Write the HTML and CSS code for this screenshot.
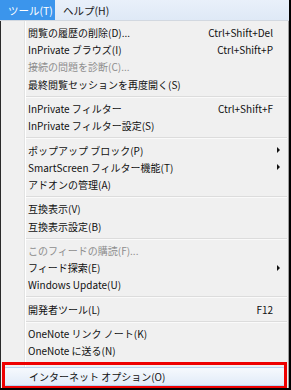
FILE: index.html
```html
<!DOCTYPE html>
<html lang="ja">
<head>
    <meta charset="UTF-8">
    <title>ツール メニュー</title>
    <link rel="stylesheet" href="styles.css">
</head>
<body>
    <div class="frame">
        <div class="menubar">
            <span class="tab active">ツール(T)</span>
            <span class="tab">ヘルプ(H)</span>
        </div>

        <div class="menu">
            <div class="item"><span>閲覧の履歴の削除(D)...</span><span class="key">Ctrl+Shift+Del</span></div>
            <div class="item"><span>InPrivate ブラウズ(I)</span><span class="key">Ctrl+Shift+P</span></div>
            <div class="item disabled"><span>接続の問題を診断(C)...</span></div>
            <div class="item"><span>最終閲覧セッションを再度開く(S)</span></div>
            <div class="sep"></div>
            <div class="item"><span>InPrivate フィルター</span><span class="key">Ctrl+Shift+F</span></div>
            <div class="item"><span>InPrivate フィルター設定(S)</span></div>
            <div class="sep"></div>
            <div class="item"><span>ポップアップ ブロック(P)</span><span class="arrow"></span></div>
            <div class="item"><span>SmartScreen フィルター機能(T)</span><span class="arrow"></span></div>
            <div class="item"><span>アドオンの管理(A)</span></div>
            <div class="sep"></div>
            <div class="item"><span>互換表示(V)</span></div>
            <div class="item"><span>互換表示設定(B)</span></div>
            <div class="sep"></div>
            <div class="item disabled"><span>このフィードの購読(F)...</span></div>
            <div class="item"><span>フィード探索(E)</span><span class="arrow"></span></div>
            <div class="item"><span>Windows Update(U)</span></div>
            <div class="sep"></div>
            <div class="item"><span>開発者ツール(L)</span><span class="key">F12</span></div>
            <div class="sep"></div>
            <div class="item"><span>OneNote リンク ノート(K)</span></div>
            <div class="item"><span>OneNote に送る(N)</span></div>
            <div class="sep"></div>
            <div class="item hover"><span>インターネット オプション(O)</span></div>

            <!-- annotation drawn over the menu -->
            <div class="callout"></div>
        </div>
    </div>
</body>
</html>
```

FILE: styles.css
```css
body {
    margin: 0;
    background: #f0f0f0;
    font-family: "Noto Sans CJK JP", "Noto Sans", sans-serif;
    font-size: 10px;
    color: #111;
}
.frame {
    width: 291px;
    height: 390px;
    box-sizing: border-box;
    border-right: 2px solid #000;
    border-bottom: 2px solid #000;
    display: flex;
    flex-direction: column;
    overflow: hidden;
}
.menubar {
    height: 20px;
    display: flex;
    align-items: stretch;
    background: linear-gradient(#e9f0fa, #dfe9f6);
    border-bottom: 1px solid #d2d8e0;
    flex: none;
}
.tab {
    display: flex;
    align-items: center;
    padding: 0 7px 0 8px;
    font-size: 10.5px;
    color: #1a1a1a;
    white-space: nowrap;
}
.tab.active {
    background: #3b95ec;
    color: #fff;
    width: 55px;
    box-sizing: border-box;
}
.menu {
    position: relative;
    flex: 1;
    padding-top: 3px;
    border-left: 1px solid #2a2a2a;
    border-right: 1px solid #a0a0a0;
    background: linear-gradient(to right, #f0f0f0 23px, #e2e3e3 23px, #e2e3e3 24px, #fff 24px, #fff 25px, #f0f0f0 25px);
}
.item {
    height: 17.2px;
    display: grid;
    grid-template-columns: 1fr auto 15px;
    align-items: center;
    padding-left: 27px;
    white-space: nowrap;
}
.item .key {
    grid-column: 2;
}
.item .arrow {
    grid-column: 3;
    justify-self: start;
    margin-left: 4px;
    width: 0;
    height: 0;
    border-left: 3px solid #111;
    border-top: 3px solid transparent;
    border-bottom: 3px solid transparent;
}
.disabled { color: #8d8d8d; }
.sep {
    height: 7.2px;
    margin-left: 25px;
    margin-right: 1px;
    box-sizing: border-box;
    padding-top: 3px;
}
.sep::before {
    content: "";
    display: block;
    border-top: 1px solid #dcdcdc;
    border-bottom: 1px solid #fafafa;
}
.item.hover {
    margin: 0 2px;
    padding-left: 25px;
    border: 1px solid #b7d2f0;
    border-radius: 3px;
    background: linear-gradient(#f6f9fd, #e1ebf8);
    box-sizing: border-box;
    height: 19px;
}
.callout {
    position: absolute;
    left: 1px;
    top: 341px;
    width: 285px;
    height: 27px;
    box-sizing: border-box;
    border: 3px solid #ee0000;
}
```
